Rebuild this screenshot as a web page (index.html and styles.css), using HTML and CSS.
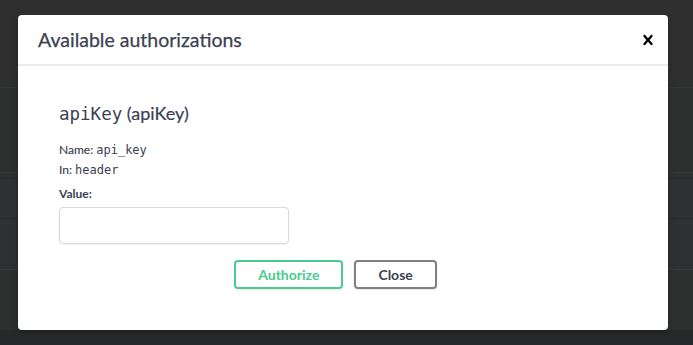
FILE: index.html
```html
<!DOCTYPE html>
<html>
<head>
<meta charset="utf-8">
<link rel="stylesheet" href="styles.css">
</head>
<body>
<div class="backdrop">
  <div class="bg-row r1"></div>
  <div class="bg-row r2"></div>
  <div class="bg-row r3"></div>
  <div class="bg-row r4"></div>
  <div class="bg-row r5"></div>
  <div class="bg-row r6"></div>
  <div class="bg-row r7"></div>
</div>
<div class="modal">
  <div class="modal-header">
    <h3 class="modal-title">Available authorizations</h3>
    <button class="close-modal" aria-label="Close">
      <svg width="20" height="20" viewBox="0 0 20 20"><path d="M14.348 14.849c-.469.469-1.229.469-1.697 0L10 11.819l-2.651 3.029c-.469.469-1.229.469-1.697 0-.469-.469-.469-1.229 0-1.697l2.758-3.15-2.759-3.152c-.469-.469-.469-1.228 0-1.697.469-.469 1.228-.469 1.697 0L10 8.183l2.651-3.031c.469-.469 1.228-.469 1.697 0 .469.469.469 1.229 0 1.697l-2.758 3.152 2.758 3.150c.469.469.469 1.229 0 1.698z" fill="#000"/></svg>
    </button>
  </div>
  <div class="modal-content">
    <h4 class="auth-title"><code class="mono-title">apiKey</code> (apiKey)</h4>
    <p class="auth-line first">Name: <code class="mono">api_key</code></p>
    <p class="auth-line">In: <code class="mono">header</code></p>
    <label class="value-label">Value:</label>
    <input class="value-input" type="text">
    <div class="btn-wrapper">
      <button class="btn authorize">Authorize</button>
      <button class="btn close">Close</button>
    </div>
  </div>
</div>
</body>
</html>
```

FILE: styles.css
```css
html, body {
  margin: 0;
  padding: 0;
}
body {
  width: 693px;
  height: 345px;
  overflow: hidden;
  background: #2f2f30;
  font-family: Lato, "Open Sans", sans-serif;
  color: #3b4151;
  position: relative;
}
.backdrop {
  display: flex;
  flex-direction: column;
}
.bg-row { box-sizing: border-box; }
.r1 { height: 88px; background: #2f2f2f; border-bottom: 1px solid #363737; }
.r2 { height: 85px; background: #2e2f2f; border-bottom: 1px solid #383838; }
.r3 { height: 6px; background: #2f3031; border-bottom: 1px solid #232a33; }
.r4 { height: 40px; background: #2f3132; border-bottom: 1px solid #232a33; }
.r5 { height: 51px; background: #2e3031; border-bottom: 1px solid #383838; }
.r6 { height: 60px; background: #2e2f2f; }
.r7 { height: 15px; background: #28292b; }

.modal {
  position: absolute;
  left: 18px;
  top: 15px;
  width: 650px;
  height: 315px;
  background: #fff;
  border-radius: 4px;
  box-shadow: 0 2px 6px rgba(0,0,0,0.25);
  box-sizing: border-box;
}
.modal-header {
  display: flex;
  align-items: center;
  padding: 12px 0;
  border-bottom: 2px solid #ebebeb;
  height: 51px;
  box-sizing: border-box;
}
.modal-title {
  flex: 1;
  margin: 0 0 0 20px;
  font-size: 19.5px;
  font-weight: 400;
  line-height: 27px;
  color: #3b4151;
  -webkit-text-stroke: 0.25px #3b4151;
}
.close-modal {
  border: none;
  background: none;
  padding: 0;
  margin: 0 10px 0 0;
  width: 20px;
  height: 20px;
  display: flex;
}
.modal-content {
  padding: 36px 41px 0 41px;
  display: flex;
  flex-direction: column;
  align-items: flex-start;
}
.auth-title {
  margin: 0;
  font-size: 18px;
  font-weight: 400;
  line-height: 22px;
  color: #3b4151;
  -webkit-text-stroke: 0.2px #3b4151;
}
.mono-title {
  font-family: "DejaVu Sans Mono", monospace;
  font-size: 17.5px;
  font-weight: 400;
  -webkit-text-stroke: 0;
}
.auth-line {
  margin: 0;
  font-size: 12px;
  line-height: 20px;
  -webkit-text-stroke: 0.15px #3b4151;
}
.auth-line.first { margin-top: 15px; }
.mono {
  font-family: "DejaVu Sans Mono", monospace;
  font-size: 12px;
  font-weight: 400;
  -webkit-text-stroke: 0;
}
.value-label {
  font-size: 12px;
  font-weight: 700;
  line-height: 22px;
  margin-top: 3px;
}
.value-input {
  margin-top: 2px;
  width: 230px;
  height: 37px;
  box-sizing: border-box;
  border: 1px solid #d9d9d9;
  border-radius: 4px;
  background: #fff;
  box-shadow: 0 1px 2px rgba(0,0,0,0.05);
}
.btn-wrapper {
  align-self: stretch;
  display: flex;
  justify-content: center;
  gap: 11px;
  margin-top: 16px;
  padding-right: 15px;
}
.btn {
  font-family: Lato, "Open Sans", sans-serif;
  font-size: 14px;
  font-weight: 700;
  height: 29px;
  padding: 0 22px;
  border-radius: 4px;
  background: transparent;
  box-shadow: 0 1px 2px rgba(0,0,0,0.1);
  border: 2px solid gray;
  color: #3b4151;
  box-sizing: border-box;
}
.btn.authorize {
  border-color: #49cc90;
  color: #49cc90;
}
```
